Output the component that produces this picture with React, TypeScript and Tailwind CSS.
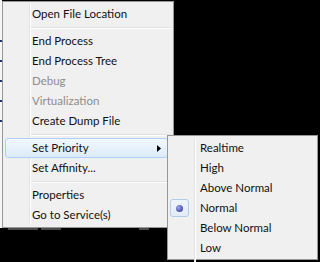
import React from "react";

const font = { fontFamily: 'Lato, "Open Sans", sans-serif' };

type Item =
  | { kind: "item"; label: string; disabled?: boolean; highlight?: boolean; arrow?: boolean }
  | { kind: "sep" };

const mainItems: Item[] = [
  { kind: "item", label: "Open File Location" },
  { kind: "sep" },
  { kind: "item", label: "End Process" },
  { kind: "item", label: "End Process Tree" },
  { kind: "item", label: "Debug", disabled: true },
  { kind: "item", label: "Virtualization", disabled: true },
  { kind: "item", label: "Create Dump File" },
  { kind: "sep" },
  { kind: "item", label: "Set Priority", highlight: true, arrow: true },
  { kind: "item", label: "Set Affinity..." },
  { kind: "sep" },
  { kind: "item", label: "Properties" },
  { kind: "item", label: "Go to Service(s)" },
];

const subItems = ["Realtime", "High", "Above Normal", "Normal", "Below Normal", "Low"];

export default function App() {
  return (
    <div className="relative w-[320px] h-[262px] bg-black overflow-hidden" style={font}>
      {/* underlying window sliver on left */}
      <div className="absolute left-0 top-0 w-[2px] h-[228px] bg-[#f4f6f8] flex flex-col gap-[18px] pt-[40px]">
        <div className="h-[2px] w-[2px] bg-[#1d2f6e]" />
        <div className="h-[2px] w-[2px] bg-[#1d2f6e]" />
        <div className="h-[2px] w-[2px] bg-[#1d2f6e]" />
        <div className="h-[2px] w-[2px] bg-[#1d2f6e]" />
        <div className="h-[2px] w-[2px] bg-[#1d2f6e]" />
      </div>
      {/* bottom sliver of underlying list */}
      <div className="absolute left-0 top-[228px] w-[170px] h-[3px] flex gap-[3px] pl-[8px] opacity-70">
        <div className="w-[30px] h-[2px] bg-[#6b6b6b]" />
        <div className="w-[20px] h-[2px] bg-[#6b6b6b]" />
        <div className="w-[10px] h-[2px] bg-[#6b6b6b] ml-[75px]" />
      </div>

      {/* main context menu */}
      <div className="absolute left-[2px] top-[1px] w-[172px] h-[227px] border border-[#979797] bg-[#f0f0f0] p-[2px] text-[11.5px] text-[#111]">
        <div className="relative flex flex-col">
          <div className="absolute left-[24px] top-0 bottom-0 w-[2px] border-l border-[#e2e3e3] bg-white" />
          {mainItems.map((it, i) =>
            it.kind === "sep" ? (
              <div key={i} className="h-[7px] flex flex-col justify-center pl-[26px]">
                <div className="h-[1px] bg-[#e0e0e0]" />
                <div className="h-[1px] bg-white" />
              </div>
            ) : (
              <div
                key={i}
                className={
                  "relative h-[20px] flex items-center leading-none " +
                  (it.disabled ? "text-[#8d8d8d] " : "") +
                  (it.highlight
                    ? "pl-[26px] rounded-[3px] border border-[#aecff7] bg-gradient-to-b from-[#f2f8fd] to-[#dcebfa] mr-[3px]"
                    : "pl-[27px]")
                }
              >
                <span className="relative">{it.label}</span>
                {it.arrow && (
                  <svg className="absolute right-[6px] top-[6px]" width="4" height="7" viewBox="0 0 4 7">
                    <path d="M0 0 L4 3.5 L0 7 Z" fill="#000" />
                  </svg>
                )}
              </div>
            )
          )}
        </div>
      </div>

      {/* submenu */}
      <div className="absolute left-[167px] top-[135px] w-[151px] h-[125px] border border-[#979797] bg-[#f0f0f0] pt-[2px] px-[2px] text-[11.5px] text-[#111]">
        <div className="relative flex flex-col">
          <div className="absolute left-[24px] top-0 bottom-[-4px] w-[2px] border-l border-[#e2e3e3] bg-white" />
          {subItems.map((s) => (
            <div key={s} className="relative h-[20px] flex items-center pl-[30px] leading-none">
              {s === "Normal" && (
                <div className="absolute left-0 top-[1px] w-[19px] h-[18px] rounded-[3px] border border-[#b4cde9] bg-gradient-to-b from-[#eef4fb] to-[#e2ecf8] flex items-center justify-center">
                  <div className="w-[7px] h-[7px] rounded-full bg-[radial-gradient(circle_at_35%_35%,#9aa4e8,#2a2f8f)]" />
                </div>
              )}
              <span className="relative">{s}</span>
            </div>
          ))}
        </div>
      </div>
    </div>
  );
}
